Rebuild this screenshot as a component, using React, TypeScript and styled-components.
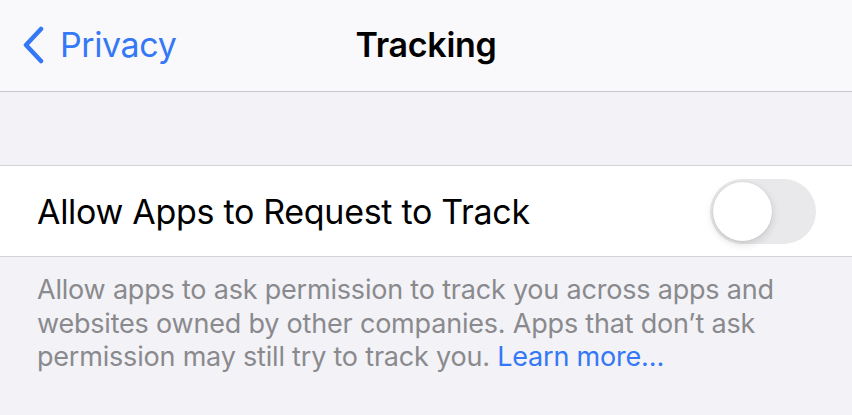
import React, { useState } from "react";
import styled, { createGlobalStyle } from "styled-components";

const GlobalStyle = createGlobalStyle`
  html, body {
    margin: 0;
    padding: 0;
    background: #f2f2f7;
    font-family: Inter, "Liberation Sans", sans-serif;
    -webkit-font-smoothing: antialiased;
  }
`;

const Screen = styled.div`
  width: 852px;
  height: 415px;
  overflow: hidden;
  background: #f2f2f7;
  display: flex;
  flex-direction: column;
`;

const NavBar = styled.header`
  height: 92px;
  flex-shrink: 0;
  background: #f9f9fb;
  border-bottom: 1px solid #c6c6c9;
  display: grid;
  grid-template-columns: 1fr auto 1fr;
  align-items: center;
  padding-bottom: 2px;
  box-sizing: border-box;
`;

const BackButton = styled.button`
  justify-self: start;
  display: flex;
  align-items: center;
  gap: 16px;
  border: none;
  background: none;
  padding: 0 0 0 22px;
  color: #3478f6;
  font-family: inherit;
  font-size: 34px;
  letter-spacing: -0.4px;
  cursor: pointer;
`;

const Title = styled.h1`
  margin: 0;
  font-size: 34px;
  font-weight: 600;
  color: #000;
  letter-spacing: -0.3px;
`;

const Spacer = styled.div`
  height: 73px;
  flex-shrink: 0;
`;

const Cell = styled.div`
  height: 90px;
  flex-shrink: 0;
  background: #fff;
  border-top: 1px solid #d4d4d8;
  border-bottom: 1px solid #d4d4d8;
  display: flex;
  align-items: center;
  justify-content: space-between;
  padding: 0 36px 0 37px;
`;

const CellLabel = styled.span`
  font-size: 34px;
  color: #000;
  letter-spacing: -0.3px;
`;

const Switch = styled.button<{ $on: boolean }>`
  position: relative;
  width: 106px;
  height: 65px;
  border-radius: 33px;
  border: none;
  padding: 0;
  background: ${(p) => (p.$on ? "#34c759" : "#e9e9eb")};
  cursor: pointer;
  transition: background 0.2s;

  &::after {
    content: "";
    position: absolute;
    top: 3px;
    left: ${(p) => (p.$on ? "44px" : "3px")};
    width: 59px;
    height: 59px;
    border-radius: 50%;
    background: #fff;
    box-shadow: 0 3px 8px rgba(0, 0, 0, 0.15), 0 0 0 0.5px rgba(0, 0, 0, 0.06);
    transition: left 0.2s;
  }
`;

const Footer = styled.p`
  margin: 0;
  padding: 16px 50px 0 37px;
  font-size: 27px;
  line-height: 33.5px;
  color: #8a8a8e;
  letter-spacing: -0.2px;
`;

const Link = styled.a`
  color: #3478f6;
  text-decoration: none;
`;

const Chevron = () => (
  <svg width="22" height="38" viewBox="0 0 22 38" fill="none">
    <path
      d="M19 3 L4 19 L19 35"
      stroke="#3478f6"
      strokeWidth="4.5"
      strokeLinecap="round"
      strokeLinejoin="round"
    />
  </svg>
);

export default function App() {
  const [allow, setAllow] = useState(false);

  return (
    <Screen>
      <GlobalStyle />
      <NavBar>
        <BackButton>
          <Chevron />
          Privacy
        </BackButton>
        <Title>Tracking</Title>
        <div />
      </NavBar>
      <Spacer />
      <Cell>
        <CellLabel>Allow Apps to Request to Track</CellLabel>
        <Switch $on={allow} onClick={() => setAllow(!allow)} aria-label="Allow Apps to Request to Track" />
      </Cell>
      <Footer>
        Allow apps to ask permission to track you across apps and websites owned by other companies. Apps that
        don’t ask permission may still try to track you. <Link href="#">Learn more…</Link>
      </Footer>
    </Screen>
  );
}
